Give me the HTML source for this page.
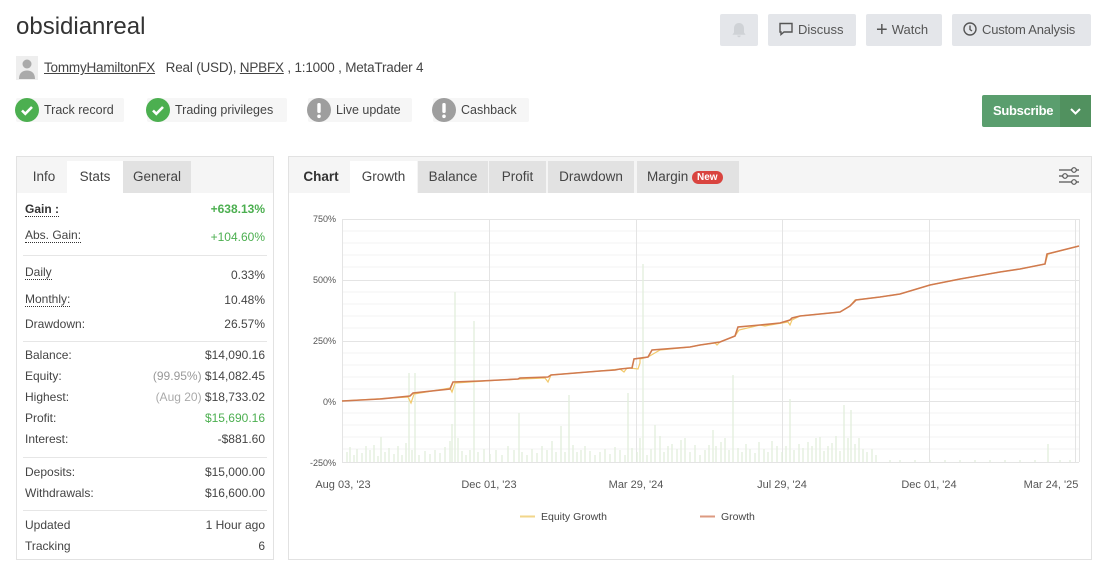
<!DOCTYPE html>
<html><head><meta charset="utf-8"><style>
*{box-sizing:border-box;margin:0;padding:0}
body{width:1119px;height:564px;background:#fff;font-family:"Liberation Sans",Arial,sans-serif;color:#333;position:relative;overflow:hidden;font-size:13px}
.abs{position:absolute}
h1{position:absolute;left:16px;top:13px;font-size:24px;font-weight:normal;color:#333}
.btn{position:absolute;top:14px;height:32px;background:#e4e6ea;border-radius:2px;color:#555;font-size:13px;line-height:32px;padding:0 10px;white-space:nowrap}
.badge{position:absolute;top:98px;height:24px;background:#f6f6f6;border-radius:2px;line-height:24px;font-size:12.5px;color:#444;padding-left:28px;padding-right:8px;white-space:nowrap}
.badge i{position:absolute;left:-1px;top:0;width:24px;height:24px;border-radius:50%;display:block}
.panel{position:absolute;border:1px solid #e2e2e2;background:#fff}
.tabbar{position:absolute;left:0;top:0;right:0;height:36px;background:#f5f5f5}
.tab{position:absolute;top:4px;height:32px;line-height:32px;text-align:center;font-size:13.5px;color:#444;white-space:nowrap}
.row{position:absolute;left:8px;right:8px;font-size:12px;color:#444;height:18px;white-space:nowrap}
.row span{position:absolute;right:0;top:0}
.u{border-bottom:1px dotted #333}
.sep{position:absolute;left:6px;right:6px;height:1px;background:#e6e6e6}
.g{color:#4caf50}.gr{color:#999}
</style></head><body>
<h1>obsidianreal</h1>
<div class="btn" style="left:720px;width:38px;padding:0"><svg width="38" height="32"><path d="M19 9c-3 0-5 2.3-5 5.3v4.2l-1.6 2.3h13.2L24 18.5v-4.2C24 11.3 22 9 19 9z M17.3 21.5a1.7 1.7 0 0 0 3.4 0z" fill="#cfd2d6"/></svg></div>
<div class="btn" style="left:768px;width:88px;padding-left:10px"><svg width="16" height="16" style="vertical-align:-3px;margin-right:4px"><path d="M2 2.5h12v8.5H6l-3 2.5V11H2z" fill="none" stroke="#555" stroke-width="1.4"/></svg>Discuss</div>
<div class="btn" style="left:866px;width:76px"><span style="font-size:20px;vertical-align:-2px;margin-right:4px">+</span>Watch</div>
<div class="btn" style="left:952px;width:139px;padding-left:10px;letter-spacing:-0.2px"><svg width="16" height="16" style="vertical-align:-3px;margin-right:4px"><circle cx="8" cy="8" r="6" fill="none" stroke="#555" stroke-width="1.4"/><path d="M8 4.5V8.5l2 1.5" fill="none" stroke="#555" stroke-width="1.4"/></svg>Custom Analysis</div>

<div class="abs" style="left:16px;top:56px;width:22px;height:24px;background:#eee"><svg width="22" height="24"><circle cx="11" cy="8" r="4.5" fill="#aaa"/><path d="M3 23c0-6 3.5-8.5 8-8.5s8 2.5 8 8.5z" fill="#aaa"/></svg></div>
<div class="abs" style="left:44px;top:60px;font-size:13.5px;color:#444;white-space:nowrap;letter-spacing:-0.2px"><span style="text-decoration:underline">TommyHamiltonFX</span>&nbsp;&nbsp; Real (USD), <span style="text-decoration:underline">NPBFX</span> , 1:1000 , MetaTrader 4</div>

<div class="badge" style="left:16px;width:108px"><i style="background:#4caf50"><svg width="24" height="24"><path d="M7 12.5l3.3 3.3L17 9" fill="none" stroke="#fff" stroke-width="2.6"/></svg></i>Track record</div>
<div class="badge" style="left:147px;width:140px"><i style="background:#4caf50"><svg width="24" height="24"><path d="M7 12.5l3.3 3.3L17 9" fill="none" stroke="#fff" stroke-width="2.6"/></svg></i>Trading privileges</div>
<div class="badge" style="left:308px;width:104px"><i style="background:#9e9e9e"><svg width="24" height="24"><rect x="10.3" y="5" width="3.4" height="10" rx="1.5" fill="#fff"/><circle cx="12" cy="18.3" r="1.8" fill="#fff"/></svg></i>Live update</div>
<div class="badge" style="left:433px;width:96px"><i style="background:#9e9e9e"><svg width="24" height="24"><rect x="10.3" y="5" width="3.4" height="10" rx="1.5" fill="#fff"/><circle cx="12" cy="18.3" r="1.8" fill="#fff"/></svg></i>Cashback</div>

<div class="abs" style="left:982px;top:95px;width:109px;height:32px;background:#5a9e6e;border-radius:2px;color:#fff;font-weight:bold;font-size:13px;line-height:32px"><span style="position:absolute;left:11px;letter-spacing:-0.3px">Subscribe</span><div style="position:absolute;left:78px;top:0;width:31px;height:32px;background:#51915f"><svg width="31" height="32"><path d="M11 14l4.5 4.5L20 14" fill="none" stroke="#fff" stroke-width="2"/></svg></div></div>

<div class="panel" style="left:16px;top:156px;width:258px;height:404px">
<div class="tabbar"></div>
<div class="tab" style="left:4px;width:46px">Info</div>
<div class="tab" style="left:50px;width:56px;background:#fff">Stats</div>
<div class="tab" style="left:106px;width:68px;background:#e2e2e2">General</div>
<div class="row" style="top:45px"><b class="u" style="font-weight:bold;color:#333">Gain :</b><span class="g" style="font-weight:bold">+638.13%</span></div>
<div class="row" style="top:71px"><span class="u" style="position:static">Abs. Gain:</span><span class="g" style="top:2px">+104.60%</span></div>
<div class="sep" style="top:98px"></div>
<div class="row" style="top:108px"><span class="u" style="position:static">Daily</span><span style="top:3px">0.33%</span></div>
<div class="row" style="top:135px"><span class="u" style="position:static">Monthly:</span><span style="top:1px">10.48%</span></div>
<div class="row" style="top:160px">Drawdown:<span>26.57%</span></div>
<div class="sep" style="top:184px"></div>
<div class="row" style="top:191px">Balance:<span>$14,090.16</span></div>
<div class="row" style="top:212px">Equity:<span><span class="gr" style="position:static">(99.95%)</span> $14,082.45</span></div>
<div class="row" style="top:233px">Highest:<span><span style="position:static;color:#aaa">(Aug 20)</span> $18,733.02</span></div>
<div class="row" style="top:254px">Profit:<span class="g">$15,690.16</span></div>
<div class="row" style="top:275px">Interest:<span>-$881.60</span></div>
<div class="sep" style="top:300px"></div>
<div class="row" style="top:308px">Deposits:<span>$15,000.00</span></div>
<div class="row" style="top:329px">Withdrawals:<span>$16,600.00</span></div>
<div class="sep" style="top:353px"></div>
<div class="row" style="top:361px">Updated<span>1 Hour ago</span></div>
<div class="row" style="top:382px">Tracking<span>6</span></div>
</div>

<div class="panel" style="left:288px;top:156px;width:804px;height:404px">
<div class="tabbar"></div>
<div class="tab" style="left:6px;width:52px;font-weight:bold;color:#333">Chart</div>
<div class="tab" style="left:61px;width:67px;background:#fff">Growth</div>
<div class="tab" style="left:129px;width:70px;background:#e2e2e2">Balance</div>
<div class="tab" style="left:200px;width:57px;background:#e2e2e2">Profit</div>
<div class="tab" style="left:259px;width:86px;background:#e2e2e2">Drawdown</div>
<div class="tab" style="left:348px;width:102px;background:#e2e2e2;text-align:left;padding-left:10px">Margin <span style="background:#d9443f;color:#fff;font-size:10px;font-weight:bold;border-radius:7px;padding:0 5px;vertical-align:1px;line-height:13px;display:inline-block">New</span></div>
<svg class="abs" style="left:768px;top:8px" width="24" height="22"><g fill="none" stroke="#555" stroke-width="1.2"><path d="M2 5h20M2 11h20M2 17h20"/><circle cx="17" cy="5" r="2.3" fill="#f5f5f5"/><circle cx="8" cy="11" r="2.3" fill="#f5f5f5"/><circle cx="17" cy="17" r="2.3" fill="#f5f5f5"/></g></svg>
</div>

<svg class="abs" style="left:0;top:0" width="1119" height="564">
<g stroke="#f3f3f3" stroke-width="1">
<path d="M342 231H1079M342 243H1079M342 255H1079M342 267H1079M342 292H1079M342 304H1079M342 316H1079M342 328H1079M342 353H1079M342 365H1079M342 377H1079M342 389H1079M342 413H1079M342 425H1079M342 437H1079M342 449H1079"/>
</g>
<g stroke="#e4e4e4" stroke-width="1">
<path d="M342 219.5H1079M342 280.5H1079M342 341.5H1079M342 401.5H1079M342 462.5H1079M342.5 219V462M489.5 219V462M636.5 219V462M782.5 219V462M929.5 219V462M1075.5 219V462M1079.5 219V462"/>
</g>
<g stroke="#e2efdc" stroke-width="1.3">
<path d="M347 462V452M350 462V447M354 462V455M357 462V449M362 462V453M366 462V446M370 462V450M374 462V445M378 462V456M381 462V437M385 462V452M389 462V448M394 462V454M398 462V446M402 462V455M406 462V443M409 462V373M412 462V450M415 462V373M419 462V455M425 462V451M430 462V454M435 462V450M440 462V453M445 462V447M450 462V441M452 462V424M455 462V292M458 462V438M462 462V451M466 462V455M470 462V450M474 462V321M478 462V452M484 462V449M490 462V454M496 462V450M502 462V455M508 462V446M514 462V450M519 462V413M522 462V452M527 462V455M532 462V449M537 462V453M542 462V446M547 462V450M552 462V441M556 462V452M561 462V426M565 462V452M569 462V395M573 462V445M577 462V452M581 462V450M585 462V446M590 462V451M595 462V455M600 462V452M605 462V449M610 462V454M615 462V447M620 462V450M625 462V455M628 462V393M632 462V448M637 462V452M640 462V438M643 462V264M647 462V455M651 462V449M655 462V425M660 462V436M664 462V452M668 462V446M672 462V444M677 462V449M681 462V440M685 462V438M690 462V452M695 462V445M700 462V455M705 462V450M709 462V445M713 462V430M716 462V446M721 462V442M725 462V438M729 462V450M733 462V375M738 462V448M742 462V452M746 462V444M750 462V449M755 462V453M759 462V442M764 462V449M768 462V452M772 462V441M777 462V446M782 462V452M786 462V446M790 462V399M794 462V450M799 462V444M803 462V448M808 462V442M812 462V446M816 462V438M820 462V437M824 462V451M828 462V446M832 462V443M836 462V436M840 462V451M844 462V405M848 462V438M851 462V410M855 462V444M859 462V438M863 462V449M867 462V452M872 462V449M876 462V455M890 462V460M900 462V460M915 462V460M930 462V460M945 462V460M960 462V460M975 462V460M990 462V460M1005 462V460M1020 462V460M1035 462V460M1048 462V444M1060 462V460M1070 462V460"/>
</g>
<polyline fill="none" stroke="#f2c96b" stroke-width="1.2" points="342,401 408,397 411,403 414,394 450,388 452,392 455,383 500,380 520,379 545,378 548,382 551,375 600,371 620,369 624,372 627,368 630,368 638,369 640,363 640,359 648,357 660,350 690,347 700,345 715,343 717,345 720,342 735,336 739,330 760,325 765,326 770,325 788,322 790,325 792,320 800,316 840,312 850,306 855,300 880,297 900,294 930,285 960,279 1000,272 1020,269 1045,264 1048,254 1079,246"/>
<polyline fill="none" stroke="#d07a4e" stroke-width="1.6" points="342,401 380,399 410,396 413,393 450,389 453,382 480,381 500,380 518,379 520,378 548,377 551,375 600,371 615,370 620,369 630,368 632,368 634,359 648,357 652,350 690,347 700,345 720,342 735,336 738,327 760,325 780,323 790,320 792,318 800,316 840,312 850,306 856,300 880,297 900,294 930,285 960,279 1000,272 1020,269 1045,264 1047,254 1079,246"/>
<g font-family="Liberation Sans,Arial,sans-serif" font-size="9" fill="#555" text-anchor="end">
<text x="336" y="222">750%</text><text x="336" y="283">500%</text><text x="336" y="344">250%</text><text x="336" y="405">0%</text><text x="336" y="466">-250%</text>
</g>
<g font-family="Liberation Sans,Arial,sans-serif" font-size="11" fill="#555" text-anchor="middle">
<text x="343" y="488">Aug 03, '23</text><text x="489" y="488">Dec 01, '23</text><text x="636" y="488">Mar 29, '24</text><text x="782" y="488">Jul 29, '24</text><text x="929" y="488">Dec 01, '24</text><text x="1051" y="488">Mar 24, '25</text>
</g>
<path d="M520 516.5H535" stroke="#f2d68a" stroke-width="2"/>
<path d="M700 516.5H715" stroke="#dc9a80" stroke-width="2"/>
<g font-family="Liberation Sans,Arial,sans-serif" font-size="10.5" fill="#444"><text x="541" y="520">Equity Growth</text><text x="721" y="520">Growth</text></g>
</svg>
</body></html>
